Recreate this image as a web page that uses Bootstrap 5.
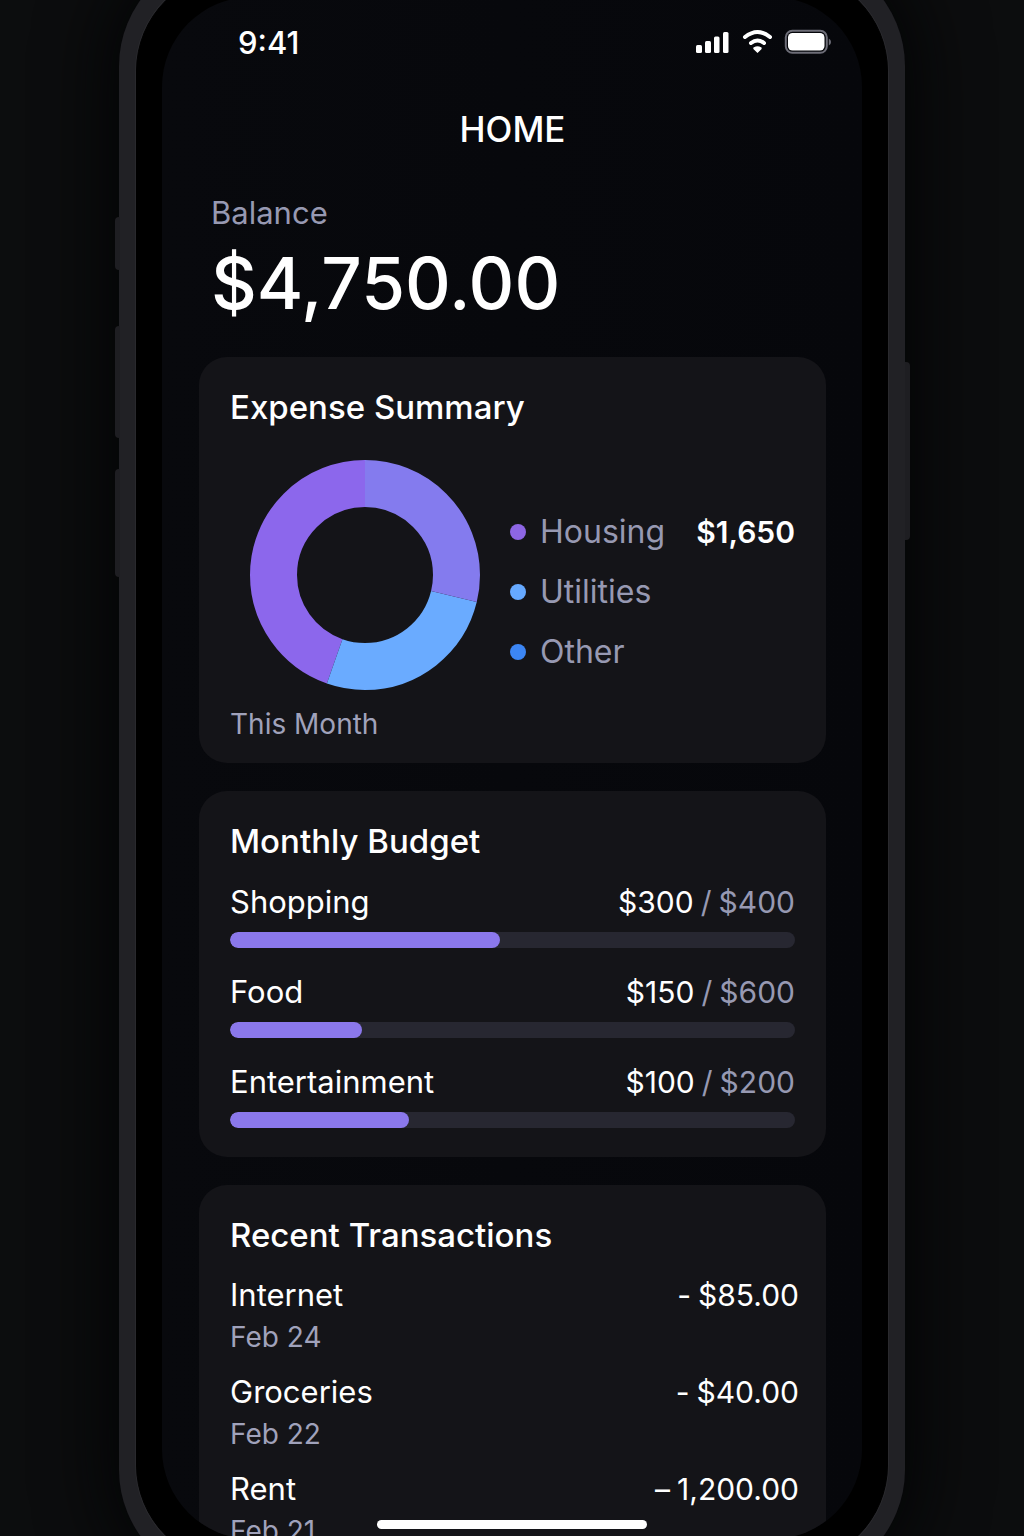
<!DOCTYPE html>
<html lang="en" data-bs-theme="dark">
<head>
<meta charset="utf-8">
<meta name="viewport" content="width=device-width, initial-scale=1">
<title>Home</title>
<link href="https://cdn.jsdelivr.net/npm/bootstrap@5.3.0/dist/css/bootstrap.min.css" rel="stylesheet">
<style>
  :root { --ink: #fff; --muted: #9799b2; --panel: #141418; --accent: #8b78ec; --frame: #212125; }
  body { font-family: Inter, "Liberation Sans", sans-serif; font-size: 31px; line-height: 40px; color: var(--ink); background: #0c0d0e; }
  .stage { height: 100vh; }
  /* the device is taller than the window, so its ends are cut off */
  .phone { width: 100%; max-width: 786px; height: calc(100vh + 92px); margin-top: -46px; padding: 17px; border-radius: 112px; background: var(--frame); box-shadow: 0 0 70px 10px #030405; }
  .bezel { padding: 25px; border: 1px solid #000; border-radius: 100px; background: #000; box-shadow: 0 0 0 1px #29292d; }
  .viewport-area { border-radius: 90px; background: linear-gradient(90deg, #08090d, #06070b); padding: 26px 36px 0 37px; }
  .side-key { width: 5px; background: #1e1e22; }
  .key-left { left: -4px; border-radius: 4px 0 0 4px; }
  .key-right { right: -5px; border-radius: 0 4px 4px 0; }
  .key-mute { top: 263px; height: 53px; }
  .key-up { top: 372px; height: 112px; }
  .key-down { top: 515px; height: 108px; }
  .key-power { top: 408px; height: 178px; }
  .status { padding-left: 39px; margin-right: -5px; font-size: 31px; }
  .page-title { margin: 46px 0 0; font-size: 35px; line-height: 40px; }
  .balance { padding: 44px 12px 0; }
  .balance-sum { font-size: 71px; line-height: 84px; margin-top: 8px; }
  .muted { color: var(--muted); }
  .soft { color: #a0a2bb; font-size: 28px; }
  .panel { background: var(--panel); border-radius: 28px; padding: 30px 31px 0; }
  .panel h2 { font-size: 33px; line-height: 40px; margin: 0; }
  .panels { margin-top: 32px; gap: 28px; }
  .chart-row { margin: 33px 0 0 20px; gap: 30px; }
  .legend { padding-top: 42px; }
  .legend li { font-size: 32px; line-height: 60px; gap: 14px; }
  .dot { width: 16px; height: 16px; border-radius: 50%; }
  .money, .legend .money { font-size: 30px; gap: 7px; }
  .budget { margin-top: 21px; gap: 24px; padding-bottom: 29px; }
  .progress { --bs-progress-height: 16px; --bs-progress-bg: #272731; --bs-progress-border-radius: 8px; --bs-progress-bar-bg: var(--accent); margin-top: 10px; }
  .progress-bar { border-radius: 8px; }
  .month-note { margin-top: 14px; padding-bottom: 19px; }
  .moves { margin: 20px -4px 0 0; gap: 15px; }
  .moves .soft { padding-top: 2px; }
  .home-bar { width: 270px; height: 9px; bottom: 10px; border-radius: 5px; background: #fff; }
</style>
</head>
<body>
<div class="stage d-flex justify-content-center overflow-hidden">
  <div class="phone position-relative flex-shrink-0">
    <span class="side-key key-left key-mute position-absolute"></span>
    <span class="side-key key-left key-up position-absolute"></span>
    <span class="side-key key-left key-down position-absolute"></span>
    <span class="side-key key-right key-power position-absolute"></span>
    <div class="bezel h-100">
      <div class="viewport-area h-100 position-relative overflow-hidden">
        <header>
          <div class="status d-flex justify-content-between align-items-center fw-medium">
            <time>9:41</time>
            <svg width="140" height="28" viewBox="0 0 140 28" role="img" aria-label="Signal, Wi-Fi and battery">
              <g fill="#fff">
                <rect x="5" y="16" width="6" height="8" rx="1.5"/>
                <rect x="14" y="12" width="6" height="12" rx="1.5"/>
                <rect x="23" y="7.500" width="5.500" height="16.500" rx="1.500"/>
                <rect x="32" y="3" width="5.500" height="21" rx="1.500"/>
                <path d="M66.500 24 L62.600 20.200 C62 19.500 62.200 18.700 63 18.300 Q66.500 16.200 70 18.300 C70.800 18.700 71 19.500 70.400 20.200 Z"/>
              </g>
              <g fill="none" stroke="#fff" stroke-width="4" stroke-linecap="round">
                <path d="M54 8 Q66.500 -2 79 8"/>
                <path d="M60 14 Q66.500 9 73 14"/>
              </g>
              <rect x="94.800" y="1.800" width="41" height="22" rx="6.500" fill="none" stroke="#6d6d77" stroke-width="2"/>
              <rect x="97" y="4" width="36.500" height="17.500" rx="4.500" fill="#fff"/>
              <path d="M137.800 9.500 Q140 10.500 140 13 T137.800 16.500 Z" fill="#6d6d77"/>
            </svg>
          </div>
          <h1 class="page-title text-center fw-medium">HOME</h1>
        </header>
        <main>
          <section class="balance">
            <div class="muted">Balance</div>
            <div class="balance-sum fw-medium">$4,750.00</div>
          </section>
          <div class="panels d-flex flex-column">
            <section class="panel">
              <h2 class="fw-medium">Expense Summary</h2>
              <div class="chart-row d-flex align-items-start">
                <svg class="flex-shrink-0" width="230" height="230" viewBox="0 0 230 230" role="img" aria-label="Expenses by category">
                  <g fill="none" stroke-width="47" transform="rotate(-90 115 115)">
                    <circle cx="115" cy="115" r="91.500" stroke="#8c67ec" pathLength="360" stroke-dasharray="0 199.400 160.600 0"/>
                    <circle cx="115" cy="115" r="91.500" stroke="#6aabff" pathLength="360" stroke-dasharray="0 103.700 95.700 160.600"/>
                    <circle cx="115" cy="115" r="91.500" stroke="#847bee" pathLength="360" stroke-dasharray="103.700 256.300"/>
                  </g>
                </svg>
                <ul class="legend list-unstyled mb-0 flex-grow-1">
                  <li class="d-flex align-items-center"><span class="dot" style="background:#8d66e4"></span><span class="muted">Housing</span><span class="money ms-auto fw-semibold">$1,650</span></li>
                  <li class="d-flex align-items-center"><span class="dot" style="background:#66a9ff"></span><span class="muted">Utilities</span></li>
                  <li class="d-flex align-items-center"><span class="dot" style="background:#3c86f4"></span><span class="muted">Other</span></li>
                </ul>
              </div>
              <div class="soft month-note">This Month</div>
            </section>
            <section class="panel">
              <h2 class="fw-medium">Monthly Budget</h2>
              <div class="budget d-flex flex-column">
                <div>
                  <div class="d-flex justify-content-between"><span>Shopping</span><span class="money d-flex"><span>$300</span><span class="muted">/</span><span class="muted">$400</span></span></div>
                  <div class="progress" role="progressbar" aria-label="Shopping"><div class="progress-bar" style="width:47.7%"></div></div>
                </div>
                <div>
                  <div class="d-flex justify-content-between"><span>Food</span><span class="money d-flex"><span>$150</span><span class="muted">/</span><span class="muted">$600</span></span></div>
                  <div class="progress" role="progressbar" aria-label="Food"><div class="progress-bar" style="width:23.4%"></div></div>
                </div>
                <div>
                  <div class="d-flex justify-content-between"><span>Entertainment</span><span class="money d-flex"><span>$100</span><span class="muted">/</span><span class="muted">$200</span></span></div>
                  <div class="progress" role="progressbar" aria-label="Entertainment"><div class="progress-bar" style="width:31.6%"></div></div>
                </div>
              </div>
            </section>
            <section class="panel">
              <h2 class="fw-medium">Recent Transactions</h2>
              <ul class="moves list-unstyled d-flex flex-column">
                <li><div class="d-flex justify-content-between"><span>Internet</span><span class="money d-flex"><span>-</span><span>$85.00</span></span></div><div class="soft">Feb 24</div></li>
                <li><div class="d-flex justify-content-between"><span>Groceries</span><span class="money d-flex"><span>-</span><span>$40.00</span></span></div><div class="soft">Feb 22</div></li>
                <li><div class="d-flex justify-content-between"><span>Rent</span><span class="money d-flex"><span>–</span><span>1,200.00</span></span></div><div class="soft">Feb 21</div></li>
              </ul>
            </section>
          </div>
        </main>
        <div class="home-bar position-absolute start-50 translate-middle-x"></div>
      </div>
    </div>
  </div>
</div>
<script src="https://cdn.jsdelivr.net/npm/bootstrap@5.3.0/dist/js/bootstrap.bundle.min.js"></script>
</body>
</html>
